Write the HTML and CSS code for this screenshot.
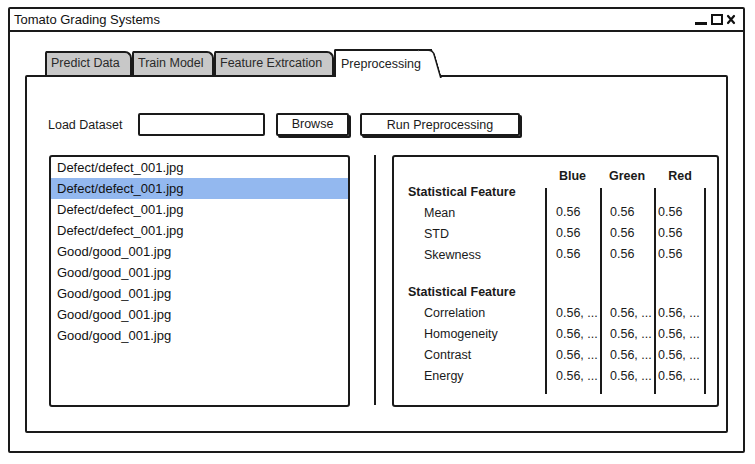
FILE: index.html
```html
<!DOCTYPE html>
<html>
<head>
<meta charset="utf-8">
<link rel="stylesheet" href="styles.css">
</head>
<body>
<div class="window">
  <div class="titlebar">
    <span class="title">Tomato Grading Systems</span>
    <div class="controls">
      <svg width="42" height="14" viewBox="0 0 42 14">
        <rect x="0" y="9" width="12" height="3" fill="#111"/>
        <rect x="17" y="2" width="10" height="9" fill="none" stroke="#111" stroke-width="2"/>
        <path d="M33 3 L39 10 M39 3 L33 10" stroke="#111" stroke-width="2.2" stroke-linecap="round"/>
      </svg>
    </div>
  </div>
  <div class="wbody">
    <div class="tabs">
      <div class="tab">Predict Data</div>
      <div class="tab">Train Model</div>
      <div class="tab">Feature Extrcation</div>
      <div class="tab active">Preprocessing</div>
    </div>
    <div class="panel">
      <div class="toprow">
        <span class="label">Load Dataset</span>
        <div class="input"></div>
        <div class="btn browse">Browse</div>
        <div class="btn run">Run Preprocessing</div>
      </div>
      <div class="lower">
        <div class="list">
          <div class="item">Defect/defect_001.jpg</div>
          <div class="item sel">Defect/defect_001.jpg</div>
          <div class="item">Defect/defect_001.jpg</div>
          <div class="item">Defect/defect_001.jpg</div>
          <div class="item">Good/good_001.jpg</div>
          <div class="item">Good/good_001.jpg</div>
          <div class="item">Good/good_001.jpg</div>
          <div class="item">Good/good_001.jpg</div>
          <div class="item">Good/good_001.jpg</div>
        </div>
        <div class="sep"></div>
        <div class="stats">
          <div class="labels">
            <div class="row head">Statistical Feature</div>
            <div class="row sub">Mean</div>
            <div class="row sub">STD</div>
            <div class="row sub">Skewness</div>
            <div class="row head second">Statistical Feature</div>
            <div class="row sub">Correlation</div>
            <div class="row sub">Homogeneity</div>
            <div class="row sub">Contrast</div>
            <div class="row sub">Energy</div>
          </div>
          <div class="col c1">
            <div class="chead">Blue</div>
            <div class="cbody">
              <div class="row">0.56</div><div class="row">0.56</div><div class="row">0.56</div>
              <div class="row gap">0.56, ...</div><div class="row">0.56, ...</div><div class="row">0.56, ...</div><div class="row">0.56, ...</div>
            </div>
          </div>
          <div class="col c2">
            <div class="chead">Green</div>
            <div class="cbody">
              <div class="row">0.56</div><div class="row">0.56</div><div class="row">0.56</div>
              <div class="row gap">0.56, ...</div><div class="row">0.56, ...</div><div class="row">0.56, ...</div><div class="row">0.56, ...</div>
            </div>
          </div>
          <div class="col c3">
            <div class="chead">Red</div>
            <div class="cbody">
              <div class="row">0.56</div><div class="row">0.56</div><div class="row">0.56</div>
              <div class="row gap">0.56, ...</div><div class="row">0.56, ...</div><div class="row">0.56, ...</div><div class="row">0.56, ...</div>
            </div>
          </div>
        </div>
      </div>
    </div>
  </div>
</div>
</body>
</html>
```
FILE: styles.css
```css
* { box-sizing: border-box; }
html, body { margin: 0; padding: 0; background: #fff; }
body {
  font-family: "Liberation Sans", Arial, sans-serif;
  font-size: 12.5px;
  color: #1a1a1a;
}
.window {
  margin: 7px 0 0 8px;
  width: 737px;
  height: 446px;
  border: 2px solid #1a1a1a;
  border-radius: 2px;
  display: flex;
  flex-direction: column;
}
.titlebar {
  height: 23px;
  border-bottom: 2px solid #1a1a1a;
  display: flex;
  align-items: center;
  justify-content: space-between;
  padding: 0 6px 0 4px;
}
.title { font-size: 13px; color: #111; }
.controls { display: flex; align-items: center; padding-top: 1px; }
.controls svg { display: block; }
.wbody { padding: 0 15px; }
.tabs {
  display: flex;
  align-items: flex-end;
  margin: 17px 0 0 20px;
  height: 26px;
  position: relative;
  z-index: 2;
}
.tab {
  height: 24px;
  border: 2px solid #1a1a1a;
  border-bottom: none;
  border-radius: 2px 7px 0 0;
  background: #c8c8c8;
  padding: 0 4px 0 4px;
  line-height: 21px;
  color: #2a2a2a;
  font-size: 12.5px;
}
.tab:nth-child(1) { width: 87px; }
.tab:nth-child(2) { width: 82px; }
.tab:nth-child(3) { width: 120px; }
.tab.active {
  height: 28px;
  margin-bottom: -2px;
  background: #fff;
  width: 98px;
  border-right: none;
  border-radius: 2px 0 0 0;
  line-height: 27px;
  padding-left: 5px;
  position: relative;
  color: #222;
}
.tab.active::after {
  content: "";
  position: absolute;
  top: -2px;
  right: -10px;
  width: 14px;
  height: 27px;
  border-top: 2px solid #1a1a1a;
  border-right: 2px solid #1a1a1a;
  border-radius: 0 6px 0 0;
  background: #fff;
  transform: skewX(16deg);
  transform-origin: bottom left;
}
.panel {
  height: 358px;
  border: 2px solid #1a1a1a;
  border-radius: 2px;
  padding: 35px 6px 0 22px;
  position: relative;
  z-index: 1;
}
.toprow {
  display: flex;
  align-items: center;
  height: 25px;
}
.label { width: 90px; margin-left: -1px; padding-right: 1px; }
.input {
  width: 127px;
  height: 23px;
  border: 2px solid #1a1a1a;
  border-radius: 2px;
  margin-right: 11px;
}
.btn {
  height: 23px;
  border: 2px solid #1a1a1a;
  border-radius: 2px;
  box-shadow: 2px 2px 0 #1a1a1a;
  text-align: center;
  line-height: 19px;
  margin-top: -1px;
}
.browse { width: 73px; margin-right: 11px; }
.run { width: 160px; padding-top: 1px; }
.lower {
  display: flex;
  margin-top: 18px;
  height: 252px;
}
.list {
  width: 301px;
  height: 252px;
  border: 2px solid #1a1a1a;
  border-radius: 3px;
}
.item {
  height: 21px;
  line-height: 21px;
  padding-left: 6px;
  font-size: 13px;
  color: #111;
}
.item.sel { background: #93b8ef; }
.sep {
  width: 2px;
  height: 250px;
  background: #1a1a1a;
  margin: 0 16px 0 24px;
}
.stats {
  width: 327px;
  height: 252px;
  border: 2px solid #1a1a1a;
  border-radius: 3px;
  display: flex;
  padding-top: 9px;
}
.labels { width: 151px; padding: 16px 0 0 14px; }
.row { height: 21px; line-height: 21px; }
.head { font-weight: bold; }
.head.second { margin-top: 16px; }
.sub { padding-left: 16px; }
.col { display: flex; flex-direction: column; }
.chead {
  height: 22px;
  line-height: 20px;
  text-align: center;
  font-weight: bold;
}
.cbody {
  height: 206px;
  border-left: 2px solid #1a1a1a;
  padding-top: 14px;
}
.cbody .gap { margin-top: 38px; }
.c1 { width: 55px; }
.c1 .cbody { padding-left: 9px; }
.c2 { width: 54px; }
.c2 .cbody { padding-left: 8px; }
.c3 { width: 52px; }
.c3 .cbody { padding-left: 2px; border-right: 2px solid #1a1a1a; }
```
